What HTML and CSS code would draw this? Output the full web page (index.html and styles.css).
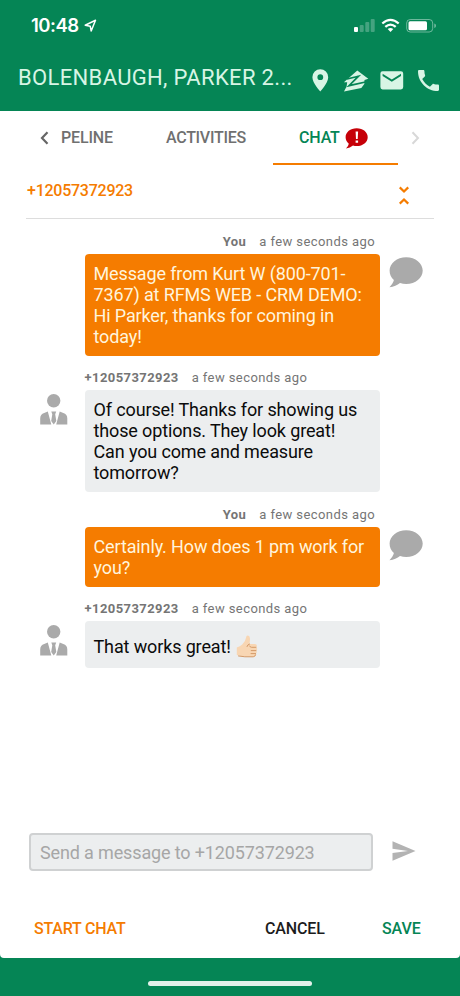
FILE: index.html
```html
<!DOCTYPE html>
<html lang="en">
<head>
<meta charset="utf-8">
<title>Chat</title>
<link rel="stylesheet" href="styles.css">
</head>
<body>
<svg class="defs" width="0" height="0" aria-hidden="true">
  <symbol id="bubble" viewBox="0 0 34 31"><path d="M17.2.2C26.500.2 33.700 6.200 33.700 13.500S26.500 27 17.200 27c-2.200 0-4.200-.3-6.200-.9C8.300 28.300 4.800 30 .5 30.300 2.400 28 4.500 25.300 4.900 23 2 20.500.6 17.300.6 13.500.6 6.200 7.900.2 17.200.2Z"/></symbol>
  <symbol id="person" viewBox="0 0 28 31"><circle cx="13.700" cy="6.700" r="6.700"/><path d="M.2 30.500V24.500Q.2 20 4.200 18.900L7.800 17.500 11.300 30.500ZM27.300 30.500V24.500Q27.300 20 23.300 18.900L19.700 17.500 16.200 30.500ZM11.300 17.600H16.200L15.200 20.300 16.300 27 13.750 30.500 11.200 27 12.300 20.300Z"/></symbol>
</svg>
<div class="app">
  <header class="top">
    <div class="status">
      <span class="clock">10:48</span>
      <svg class="loc" width="13" height="14" viewBox="0 0 13 14"><path d="M1.200 6.200 11.500 1.300 7.200 12 6.200 7.200Z" fill="none" stroke="#fff" stroke-width="1.500" stroke-linejoin="round"/></svg>
      <svg class="signals" width="84" height="16" viewBox="0 0 84 16">
        <rect x="1" y="9" width="4" height="5" rx="1" fill="#fff"/>
        <g fill="#fff" opacity=".25"><rect x="6.700" y="7" width="4" height="7" rx="1"/><rect x="12.300" y="4" width="4" height="10" rx="1"/><rect x="17.700" y="1" width="4" height="13" rx="1"/></g>
        <g fill="none" stroke="#fff" stroke-width="2.300"><path d="M29.300 5.500Q37.500-1.700 45.700 5.500M32.300 8.900Q37.500 4.400 42.700 8.900"/></g>
        <path d="M34.700 11Q37.500 8.800 40.300 11L37.500 14Z" fill="#fff"/>
        <rect x="53.700" y="1.500" width="26" height="12.500" rx="3.500" fill="none" stroke="#fff" stroke-opacity=".42"/>
        <rect x="55.500" y="3.300" width="18.500" height="9" rx="1.500" fill="#fff"/>
        <path d="M81.300 5.500Q83 6 83 7.700T81.300 10Z" fill="#fff" opacity=".45"/>
      </svg>
    </div>
    <div class="bar">
      <h1 class="title">BOLENBAUGH, PARKER 2...</h1>
      <div class="actions">
        <svg width="17" height="23" viewBox="0 0 17 23"><path fill-rule="evenodd" d="M8.300.3A7.900 7.900 0 0 0 .4 8.200C.4 14 8.300 22.400 8.300 22.400S16.200 14 16.200 8.200A7.900 7.900 0 0 0 8.300.3ZM8.300 5.300a2.900 2.900 0 1 1 0 5.800 2.900 2.900 0 0 1 0-5.800Z"/></svg>
        <svg width="26" height="22" viewBox="0 0 26 22"><path d="M14.300.5 25.300 8.800 21.500 9.900 21.300 14 18.300 18 1 21.500 3.600 16.500 4.200 12.200.9 12.300Z"/><path d="M4 9 15.500 6.200 6 15.700 22.500 12" fill="none" stroke="#058555" stroke-width="1.700"/></svg>
        <svg width="24" height="19" viewBox="0 0 24 19"><path fill-rule="evenodd" d="M2.600.3H20.900Q23.200.3 23.200 2.600V16Q23.200 18.400 20.900 18.400H2.600Q.4 18.400.4 16V2.600Q.4.3 2.600.3ZM2.600 2.700V4.900L11.800 10.800 21 4.900V2.700L11.800 8.400Z"/></svg>
        <svg width="21" height="21" viewBox="3 3 18 18"><path d="M6.620 10.790c1.440 2.830 3.760 5.140 6.590 6.590l2.200-2.200c.27-.27.670-.36 1.020-.24 1.120.37 2.330.57 3.570.57.550 0 1 .45 1 1V20c0 .55-.45 1-1 1-9.390 0-17-7.610-17-17 0-.55.450-1 1-1h3.500c.55 0 1 .45 1 1 0 1.250.2 2.450.57 3.570.11.350.030.740-.25 1.020l-2.200 2.200z"/></svg>
      </div>
    </div>
  </header>

  <main class="sheet">
    <nav class="tabs">
      <div class="tab first">
        <svg width="9" height="14" viewBox="0 0 9 14"><path d="M7.500 1.200 2 7l5.500 5.800" fill="none" stroke="#666" stroke-width="2.200"/></svg>
        <span class="t-pipe">PELINE</span>
      </div>
      <div class="tab second"><span class="t-act">ACTIVITIES</span></div>
      <div class="tab active"><span class="t-chat">CHAT</span>
        <svg class="alert" width="23" height="21" viewBox="0 0 23 21"><path d="M11.700.3C18 .3 22.700 4.300 22.700 9.200S18 18.100 11.700 18.100q-2 0-3.700-.5Q5 20.100 1 20.500 3.500 18 3.800 15.700C1.700 14 .6 11.700.6 9.200.6 4.300 5.300.3 11.700.3Z" fill="#c60008"/><path d="M10.600 3.600h2.500l-.4 7.300H11zM10.600 12.400h2.500v2.400h-2.500z" fill="#fff"/></svg>
      </div>
      <svg class="next" width="9" height="14" viewBox="0 0 9 14"><path d="M1.500 1.200 7 7l-5.500 5.800" fill="none" stroke="#d8d8d8" stroke-width="2"/></svg>
    </nav>
    <div class="contact">
      <span class="t-num">+12057372923</span>
      <svg width="10" height="19" viewBox="0 0 10 19"><path d="M.7 1.400 5 5.500 9.300 1.400M.7 17.600 5 13.500 9.300 17.600" fill="none" stroke="#f57c00" stroke-width="2.300"/></svg>
    </div>

    <section class="chat">
      <article class="msg out">
        <div class="meta"><b class="t-you">You</b><span class="t-ago">a few seconds ago</span></div>
        <p class="body">Message from Kurt W (800-701-<br>7367) at RFMS WEB - CRM DEMO:<br>Hi Parker, thanks for coming in<br>today!</p>
        <svg class="avatar" width="34" height="31"><use href="#bubble"/></svg>
      </article>
      <article class="msg in">
        <div class="meta"><b class="t-from">+12057372923</b><span class="t-ago">a few seconds ago</span></div>
        <svg class="avatar" width="28" height="31"><use href="#person"/></svg>
        <p class="body">Of course! Thanks for showing us<br>those options. They look great!<br>Can you come and measure<br>tomorrow?</p>
      </article>
      <article class="msg out">
        <div class="meta"><b class="t-you">You</b><span class="t-ago">a few seconds ago</span></div>
        <p class="body">Certainly. How does 1 pm work for<br>you?</p>
        <svg class="avatar" width="34" height="31"><use href="#bubble"/></svg>
      </article>
      <article class="msg in">
        <div class="meta"><b class="t-from">+12057372923</b><span class="t-ago">a few seconds ago</span></div>
        <svg class="avatar" width="28" height="31"><use href="#person"/></svg>
        <p class="body single"><span>That works great!</span>
          <svg class="thumb" width="22" height="23" viewBox="0 0 22 23"><path d="M.8 12.500Q4 11.500 6.200 9.600 9.500 6.500 10 2.700 10.300.4 12 .6q2.300.6 2 4.200L13.500 9H19q1.900.2 1.900 1.800 0 1.100-.9 1.500 1.300.5 1.200 1.800-.1 1.200-1.200 1.500 1 .6.8 1.700-.2 1.100-1.200 1.300.7.7.4 1.700-.5 1.500-2.200 1.500H11Q5 21.800.8 20Z" fill="#f8d6b3"/><path d="M20 12.300H15.500q-1.500 0-1.800-1.200M20 15.600H15.200M19.600 18.600H15M13.500 9Q11.500 9.500 11 11.500M2.500 21Q8 22.200 17.200 21.800 19.200 21.700 19.600 19.800" fill="none" stroke="#d49a68" stroke-width="1" stroke-linecap="round"/></svg></p>
      </article>
    </section>

    <div class="compose">
      <div class="field"><span class="t-ph">Send a message to +12057372923</span></div>
      <svg width="24" height="20" viewBox="0 0 24 20"><path d="M.5.3 23.500 9.900.5 19.700V12L16 9.900.5 7.800Z" fill="#b3b3b3"/></svg>
    </div>
    <footer class="buttons">
      <span class="start t-start">START CHAT</span>
      <span class="cancel t-cancel">CANCEL</span>
      <span class="save t-save">SAVE</span>
    </footer>
  </main>
  <div class="home"><i></i></div>
</div>
</body>
</html>
```
FILE: styles.css
```css
* { box-sizing: border-box; margin: 0; padding: 0; }
body { width: 460px; height: 996px; overflow: hidden; background: #058555; font-family: Roboto, sans-serif; }
.defs { position: absolute; }
svg { display: block; flex: none; }
span, b, h1, p { white-space: nowrap; }
.app { display: flex; flex-direction: column; height: 996px; }
.top { height: 111px; flex: none; }
.status { display: flex; height: 51px; padding-left: 31px; }
.clock { width: 53px; margin-top: 13px; font: 600 18.5px/24px Inter, sans-serif; letter-spacing: -.5px; color: #fff; }
.loc { margin-top: 19px; }
.signals { margin: 18px 0 0 256px; }
.bar { display: flex; align-items: center; height: 54px; padding-left: 18px; }
.title { width: 294px; font-weight: 400; font-size: 22px; line-height: 26px; letter-spacing: .34px; color: #d8f5e5; }
.actions { display: flex; align-items: center; fill: #d8f5e5; }
.actions svg { margin-top: 5px; }
.actions svg:nth-child(2) { margin-left: 14px; }
.actions svg:nth-child(3) { margin-left: 11px; }
.actions svg:nth-child(4) { margin-left: 14px; }
.sheet { display: flex; flex-direction: column; height: 847px; flex: none; background: #fff; border-radius: 0 0 4px 4px; }
.tabs { display: flex; height: 54px; font-weight: 500; font-size: 16px; line-height: 53px; color: #707070; }
.tab { display: flex; }
.first { width: 139px; padding-left: 40px; gap: 12px; }
.first svg, .next { margin-top: 20px; }
.t-pipe { letter-spacing: -.15px; }
.second { width: 134px; padding-left: 27px; }
.t-act { letter-spacing: -.28px; }
.active { width: 125px; padding-left: 26px; gap: 5px; color: #058555; border-bottom: 2px solid #f57c00; }
.t-chat { letter-spacing: -.15px; }
.alert { margin-top: 17px; }
.next { margin-left: 13px; }
.contact { display: flex; justify-content: space-between; align-items: center; height: 54px; margin: 0 26px; padding: 0 25px 0 1px; border-bottom: 1px solid #ddd; color: #f57c00; font-weight: 500; font-size: 16px; }
.contact span { margin-top: -3px; letter-spacing: -.25px; }
.contact svg { margin-top: 8px; }
.chat { height: 605px; padding: 12.500px 0 0; }
.msg { display: grid; grid-template-columns: 84.500px 295px 80.500px; margin-bottom: 12.500px; }
.meta { grid-column: 2; grid-row: 1; display: flex; gap: 13px; height: 22px; line-height: 19px; font-size: 13px; color: #757575; letter-spacing: .42px; }
.out .meta { justify-content: flex-end; padding-right: 4.500px; }
.meta b { font-weight: 700; }
.body { grid-column: 2; grid-row: 2; padding: 9px; border-radius: 4px; font-size: 18px; line-height: 21px; letter-spacing: -.13px; }
.out .body { background: #f57c00; color: #fff4dc; }
.in .body { background: #eceeef; color: #0b0b0b; }
.body.single { display: flex; align-items: center; height: 47px; gap: 5px; padding-top: 12px; }
.avatar { grid-row: 2; fill: #aaa; }
.out .avatar { grid-column: 3; margin: 3px 0 0 9.500px; }
.in .avatar { grid-column: 1; margin: 4px 0 0 40px; }
.compose { display: flex; align-items: center; height: 60px; padding: 0 44px 0 29px; justify-content: space-between; margin-top: -2px; }
.field { width: 344px; height: 38px; padding-left: 9px; border: 2px solid #cfd1d2; border-radius: 4px; background: #eceeef; font-size: 18px; line-height: 35px; letter-spacing: -.14px; color: #a6a6a6; }
.compose svg { margin-top: -2px; }
.buttons { display: flex; padding: 37px 0 0 34px; font-weight: 500; font-size: 16px; line-height: 19px; }
.start { width: 231px; letter-spacing: -.2px; color: #f57c00; }
.cancel { width: 117px; letter-spacing: -.15px; color: #1c1c1c; }
.save { letter-spacing: -.1px; color: #058555; }
.home { display: flex; justify-content: center; padding-top: 23px; }
.home i { width: 164px; height: 5px; border-radius: 3px; background: #e2f1ea; }
```
